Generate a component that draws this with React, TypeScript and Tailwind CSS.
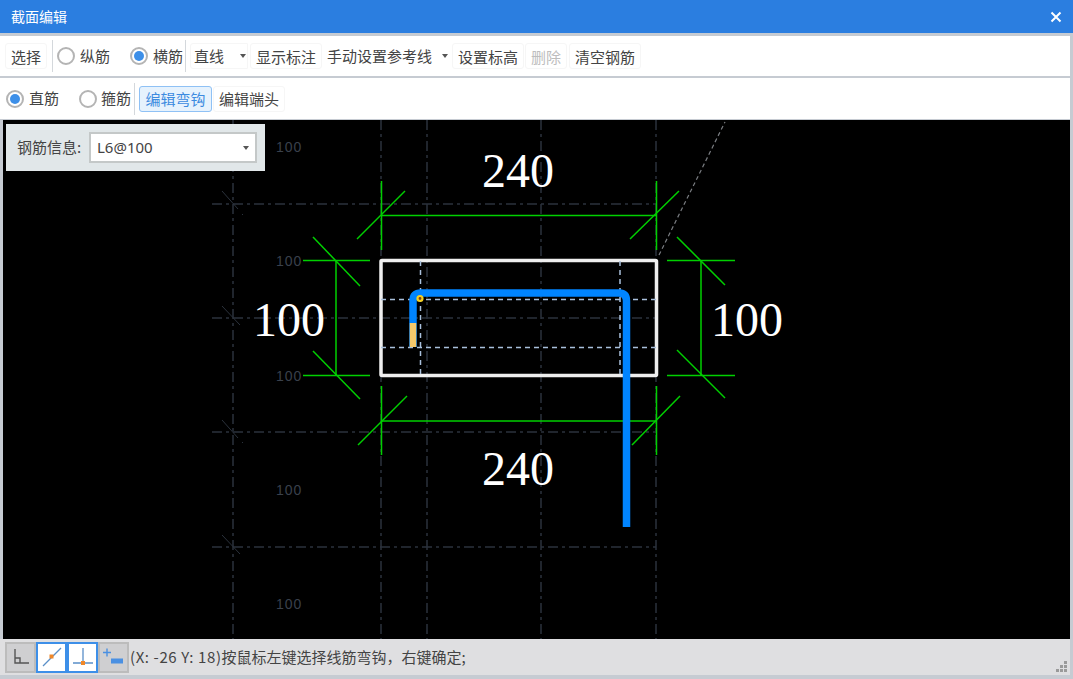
import React from "react";

const cjk = { fontFamily: '"Noto Sans CJK SC", sans-serif' };

function Radio({ on }: { on?: boolean }) {
  return (
    <span className="flex h-[18px] w-[18px] shrink-0 items-center justify-center rounded-full border-2 border-[#b4b4b4] bg-white">
      {on && <span className="h-[10px] w-[10px] rounded-full bg-[#3d8fe8]" />}
    </span>
  );
}

function Btn({ children, className = "border-[#f6f6f6]" }: { children: React.ReactNode; className?: string }) {
  return (
    <span className={`flex h-[26px] items-center rounded-[3px] border px-[5px] leading-none whitespace-nowrap ${className}`}>
      {children}
    </span>
  );
}

const Sep = () => <span className="block h-[32px] w-px shrink-0 bg-[#d4d8dc]" />;
const Caret = ({ className = "" }: { className?: string }) => (
  <span className={`h-0 w-0 border-x-[3.5px] border-t-[4px] border-x-transparent border-t-[#555] ${className}`} />
);

const grid = "#2b323c";
const green = "#00d000";

function Canvas() {
  const greens = [
    "M381 215.5H656", "M381.5 181V250", "M656.5 181V250", "M357 239L405 191", "M630 239L679 191",
    "M336 260V375", "M303 260.5H370", "M303 375.5H370", "M313 237L360 286", "M313 351L360 399",
    "M701 260V375", "M667 260.5H735", "M667 375.5H735", "M677 237L725 285", "M677 350L725 398",
    "M381 421H656", "M381.5 386V455", "M656.5 386V455", "M358 445L407 396", "M632 445L680 396",
  ];
  return (
    <svg className="block h-[519px] w-[1067px]" viewBox="3 120 1067 519">
      <g stroke={grid} strokeWidth="1.5" strokeDasharray="10 4 3 4" fill="none">
        {[233, 381, 427, 541, 656].map((x) => <path key={x} d={`M${x} 120V639`} />)}
        {[204, 318, 432, 547].map((y) => <path key={y} d={`M212 ${y}H656`} />)}
      </g>
      <g stroke={grid} strokeWidth="1" fill="none">
        <path d="M222 191L238 209M242 214L243 215" />
        <path d="M222 306L240 325" />
        <path d="M222 420L238 438M242 442L243 443" />
        <path d="M222 535L240 554" />
      </g>
      <path d="M659 255L725 122" stroke="#7a7d82" strokeWidth="1.2" strokeDasharray="4 3" fill="none" />
      <g fill="#3a414c" fontSize="14" fontFamily='"Liberation Sans", sans-serif'>
        {[152, 266, 381, 495, 609].map((y) => <text key={y} x="276" y={y} letterSpacing="1">100</text>)}
      </g>
      <g stroke={green} strokeWidth="1.5" fill="none">
        {greens.map((d) => <path key={d} d={d} />)}
      </g>
      <rect x="381" y="260.5" width="275.5" height="115" rx="1" fill="none" stroke="#eeeeee" strokeWidth="3.5" />
      <g stroke="#a9c0dc" strokeWidth="1.5" strokeDasharray="5 4" fill="none">
        <path d="M420.5 261V375" />
        <path d="M620 261V375" />
        <path d="M381 299.5H656" />
        <path d="M381 347.5H656" />
      </g>
      <path d="M413 347V301Q413 293 421 293H619Q626.5 293 626.5 301V527" fill="none" stroke="#0084ff" strokeWidth="7.5" />
      <path d="M413 323V347" fill="none" stroke="#f5c96b" strokeWidth="6.5" />
      <circle cx="420" cy="298.5" r="2.5" fill="#7a3b1e" stroke="#f5d020" strokeWidth="2.2" />
      <g fill="#ffffff" fontSize="48" fontFamily='"Liberation Serif", serif'>
        <text x="482" y="187">240</text>
        <text x="482" y="485">240</text>
        <text x="253" y="336">100</text>
        <text x="711" y="336">100</text>
      </g>
    </svg>
  );
}

const StatBtn = ({ on, children }: { on?: boolean; children: React.ReactNode }) => (
  <span className={`flex h-[31px] w-[31px] items-center justify-center border-2 ${on ? "border-[#3d8fe8] bg-white" : "border-[#bcbcbc] bg-[#cfcfd1]"}`}>
    {children}
  </span>
);

export default function App() {
  return (
    <div className="flex h-[679px] w-[1073px] flex-col overflow-hidden bg-[#c6cbd2] text-[15px] text-[#444]" style={cjk}>
      <div className="flex h-[33px] shrink-0 items-center justify-between bg-[#2b7ee0] pl-[11px] pr-[11px] text-[14px] text-white">
        <span>截面编辑</span>
        <svg width="12" height="12" viewBox="0 0 12 12"><path d="M1.5 1.5L10.5 10.5M10.5 1.5L1.5 10.5" stroke="#fff" strokeWidth="2" /></svg>
      </div>

      <div className="mr-[3px] mt-[3px] flex h-[40px] shrink-0 items-center bg-white pl-[5px]">
        <Btn>选择</Btn>
        <span className="ml-[5px]"><Sep /></span>
        <span className="ml-[4px]"><Radio /></span>
        <span className="ml-[5px]">纵筋</span>
        <span className="ml-[20px]"><Radio on /></span>
        <span className="ml-[5px]">横筋</span>
        <span className="ml-[2px]"><Sep /></span>
        <span className="ml-[4px] flex h-[26px] w-[58px] items-center rounded-l-[3px] border border-[#f6f6f6] pl-[3px]">
          直线
          <Caret className="ml-[16px]" />
        </span>
        <Btn className="ml-[2px] border-[#f6f6f6]">显示标注</Btn>
        <span className="flex h-[26px] items-center pl-[5px] pr-[4px]">
          手动设置参考线
          <Caret className="ml-[10px]" />
        </span>
        <Btn>设置标高</Btn>
        <Btn className="ml-px border-[#f6f6f6] text-[#bdbdbd]">删除</Btn>
        <Btn className="ml-[2px] border-[#f6f6f6]">清空钢筋</Btn>
      </div>

      <div className="mr-[3px] mt-[2px] flex h-[41px] shrink-0 items-center bg-white pl-[6px]">
        <Radio on />
        <span className="ml-[5px]">直筋</span>
        <span className="ml-[20px]"><Radio /></span>
        <span className="ml-[4px]">箍筋</span>
        <span className="ml-[3px]"><Sep /></span>
        <Btn className="ml-[4px] w-[73px] justify-center border-[#8fc1f5] bg-[#e6f2fd] text-[#3d8be0]">编辑弯钩</Btn>
        <Btn className="ml-px border-[#f6f6f6]">编辑端头</Btn>
      </div>

      <div className="relative mx-[3px] mt-px h-[519px] shrink-0 bg-black">
        <Canvas />
        <div className="absolute left-[3px] top-[4px] flex h-[47px] w-[259px] items-center bg-[#e1e7e9] pl-[11px]">
          <span className="w-[72px]">钢筋信息:</span>
          <span className="flex h-[31px] w-[168px] items-center justify-between border-2 border-[#c4c8c8] bg-white pl-[6px] pr-[6px]" style={{ fontFamily: '"Noto Sans", sans-serif' }}>
            L6@100
            <Caret />
          </span>
        </div>
      </div>

      <div className="relative mr-[3px] flex h-[36px] shrink-0 items-center bg-[#dfdfe1] pl-[5px] text-[15px]">
        <StatBtn>
          <svg width="18" height="18" viewBox="0 0 18 18" fill="none"><path d="M3 1V15H17M3 10H8V15" stroke="#555" strokeWidth="1.4" /></svg>
        </StatBtn>
        <StatBtn on>
          <svg width="22" height="20" viewBox="0 0 22 20" fill="none"><path d="M2 19L20 1" stroke="#5a8fc8" strokeWidth="1.3" /><rect x="8.5" y="7.5" width="4" height="4" fill="#f0882a" /></svg>
        </StatBtn>
        <StatBtn on>
          <svg width="22" height="20" viewBox="0 0 22 20" fill="none"><path d="M11 1V16M1 16H21" stroke="#5a8fc8" strokeWidth="1.3" /><rect x="9" y="14" width="4" height="4" fill="#f0882a" /></svg>
        </StatBtn>
        <StatBtn>
          <svg width="22" height="20" viewBox="0 0 22 20" fill="none"><path d="M4 1.5V9.5M0 5.5H8" stroke="#4a90e2" strokeWidth="1.4" /><rect x="8" y="11.5" width="12" height="5" fill="#4a90e2" /></svg>
        </StatBtn>
        <span className="ml-px whitespace-nowrap">
          <span className="tracking-[0.6px]">(X: -26 Y: 18)</span>按鼠标左键选择线筋弯钩，右键确定;
        </span>
        <svg className="absolute bottom-[3px] right-[3px]" width="11" height="11" viewBox="0 0 11 11" fill="#9a9a9a">
          <rect x="8" y="0" width="3" height="3" /><rect x="4" y="4" width="3" height="3" /><rect x="8" y="4" width="3" height="3" />
          <rect x="0" y="8" width="3" height="3" /><rect x="4" y="8" width="3" height="3" /><rect x="8" y="8" width="3" height="3" />
        </svg>
      </div>
    </div>
  );
}
